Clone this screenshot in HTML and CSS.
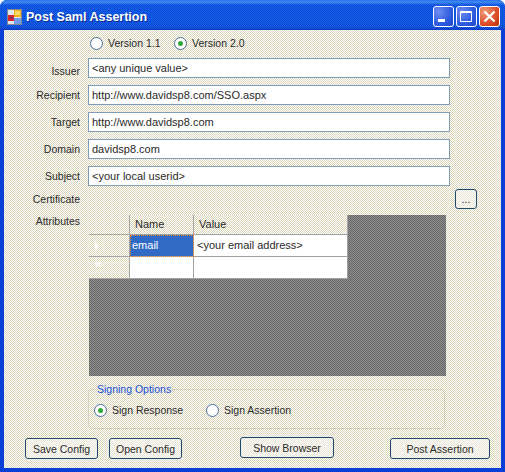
FILE: index.html
```html
<!DOCTYPE html>
<html lang="en">
<head>
<meta charset="utf-8">
<title>Post Saml Assertion</title>
<link rel="stylesheet" href="styles.css">
</head>
<body>
<div class="window">
  <header class="titlebar">
    <svg class="app-icon" width="16" height="16" viewBox="0 0 16 16">
      <rect x="0.500" y="0.500" width="14" height="15" fill="#dfe6ee" stroke="#7f8794"/>
      <rect x="7" y="1" width="7" height="7" fill="#f0b21c"/>
      <rect x="8" y="2" width="5" height="4" fill="#ffdc6a"/>
      <rect x="1" y="6" width="6" height="6" fill="#d8262c"/>
      <rect x="3" y="8" width="3" height="2" fill="#8a2a70"/>
      <rect x="7" y="9" width="7" height="6" fill="#6f9be8"/>
    </svg>
    <span class="title">Post Saml Assertion</span>
    <div class="controls">
      <button class="ctl ctl-blue" aria-label="Minimize"><svg width="21" height="21" viewBox="0 0 21 21"><rect x="5" y="13" width="7" height="3" fill="#fff"/></svg></button>
      <button class="ctl ctl-blue" aria-label="Maximize"><svg width="21" height="21" viewBox="0 0 21 21"><path d="M4.500 5.500h11v10h-11z M4.500 6.500h11" fill="none" stroke="#fff"/></svg></button>
      <button class="ctl ctl-red" aria-label="Close"><svg width="21" height="21" viewBox="0 0 21 21"><path d="M5.500 5.500l10 10M15.500 5.500l-10 10" fill="none" stroke="#fff" stroke-width="2.200"/></svg></button>
    </div>
  </header>
  <main class="client">
    <div class="versions">
      <label class="radio radio-version"><span class="dot"></span>Version 1.1</label>
      <label class="radio"><span class="dot on"></span>Version 2.0</label>
    </div>
    <div class="field"><span class="lbl lbl-low">Issuer</span><div class="input">&lt;any unique value&gt;</div></div>
    <div class="field"><span class="lbl">Recipient</span><div class="input">http://www.davidsp8.com/SSO.aspx</div></div>
    <div class="field"><span class="lbl">Target</span><div class="input">http://www.davidsp8.com</div></div>
    <div class="field"><span class="lbl">Domain</span><div class="input">davidsp8.com</div></div>
    <div class="field"><span class="lbl">Subject</span><div class="input">&lt;your local userid&gt;</div></div>
    <div class="cert"><span class="lbl">Certificate</span><button class="btn btn-dots">...</button></div>
    <div class="attrs">
      <span class="lbl">Attributes</span>
      <div class="grid-view">
        <div class="grid">
          <div class="gh"></div><div class="gh">Name</div><div class="gh">Value</div>
          <div class="rh"><span class="arrow"></span></div><div class="gc sel">email</div><div class="gc">&lt;your email address&gt;</div>
          <div class="rh"><span class="star">*</span></div><div class="gc"></div><div class="gc"></div>
        </div>
      </div>
    </div>
    <fieldset class="signing">
      <legend>Signing Options</legend>
      <label class="radio radio-sign"><span class="dot on"></span>Sign Response</label>
      <label class="radio"><span class="dot"></span>Sign Assertion</label>
    </fieldset>
    <div class="actions">
      <button class="btn btn-save">Save Config</button>
      <button class="btn btn-open">Open Config</button>
      <button class="btn btn-show">Show Browser</button>
      <button class="btn btn-post">Post Assertion</button>
    </div>
  </main>
</div>
</body>
</html>
```
FILE: styles.css
```css
* { box-sizing: border-box; }
html, body { margin: 0; padding: 0; }
body {
  width: 505px;
  height: 472px;
  overflow: hidden;
  font-family: "Liberation Sans", Arial, sans-serif;
  font-size: 11px;
  color: #2a2a2a;
  background: #fff;
}
.window {
  width: 505px;
  height: 472px;
  display: flex;
  flex-direction: column;
  background: #0a3fd8;
  padding: 0 4px 4px;
  border-radius: 7px 7px 0 0;
}
.titlebar {
  height: 30px;
  flex: none;
  display: flex;
  align-items: center;
  margin: 0 -4px;
  padding: 3px 5px 0 7px;
  border-radius: 7px 7px 0 0;
  background:
    repeating-conic-gradient(rgba(255, 255, 255, 0.07) 0 25%, rgba(0, 0, 60, 0.07) 0 50%) 0 0 / 2px 2px,
    linear-gradient(#1f6cf0 0, #3b8cf6 2px, #0a52e6 5px, #0553e4 20px, #0a4fe0 27px, #0436c4 30px);
}
.app-icon { flex: none; margin-right: 3px; }
.title {
  flex: 1;
  color: #fff;
  font-weight: bold;
  font-size: 12.500px;
  text-shadow: 1px 1px #0a2a90;
}
.controls { display: flex; gap: 2px; margin-top: -1px; }
.ctl {
  width: 21px;
  height: 21px;
  padding: 0;
  border: 1px solid #fff;
  border-radius: 3px;
  display: block;
  position: relative;
}
.ctl svg { position: absolute; left: -1px; top: -1px; }
.ctl-blue { background: radial-gradient(circle at 25% 25%, #6f8df0, #2d5ce0 60%, #1c46c8); }
.ctl-red { background: radial-gradient(circle at 25% 25%, #ef9a78, #dc4e28 60%, #b8300e); }
.client {
  flex: 1;
  padding: 3px 0 0;
  background: repeating-conic-gradient(#ffffff 0 25%, #dbd6bb 0 50%) 0 0 / 2px 2px;
}
.versions {
  height: 20px;
  display: flex;
  padding-left: 86px;
  margin-bottom: 5px;
}
.radio { display: flex; align-items: center; gap: 5px; font-size: 10.500px; }
.radio-version { width: 84px; }
.radio-sign { width: 112px; }
.dot {
  flex: none;
  width: 13px;
  height: 13px;
  border: 1px solid #4a6f9c;
  border-radius: 50%;
  background: #fff;
  display: flex;
  align-items: center;
  justify-content: center;
}
.dot.on::after {
  content: "";
  width: 5px;
  height: 5px;
  border-radius: 50%;
  background: #2fa83a;
}
.field {
  display: flex;
  height: 20px;
  margin-bottom: 7px;
  align-items: center;
}
.lbl {
  width: 76px;
  flex: none;
  text-align: right;
  font-size: 10.500px;
}
.lbl-low { margin-top: 6px; }
.input {
  width: 362px;
  height: 20px;
  margin-left: 8px;
  border: 1px solid #7f9db9;
  background: #fff;
  padding: 0 3px;
  line-height: 18px;
  white-space: nowrap;
}
.cert {
  display: flex;
  align-items: center;
  height: 20px;
  margin-top: -4px;
}
.btn {
  font: inherit;
  font-size: 10.500px;
  color: inherit;
  padding: 0;
  border: 1px solid #1f4a6e;
  border-radius: 3px;
  height: 21px;
  background: repeating-conic-gradient(#ffffff 0 25%, #e6e3d2 0 50%) 0 0 / 2px 2px;
}
.btn-dots {
  width: 22px;
  height: 20px;
  margin-left: 375px;
}
.attrs {
  display: flex;
  margin-top: 6px;
  height: 161px;
}
.grid-view {
  width: 357px;
  height: 161px;
  margin-left: 9px;
  background: repeating-conic-gradient(#8c8c8c 0 25%, #6a6a6a 0 50%) 0 0 / 2px 2px;
}
.grid {
  display: grid;
  grid-template-columns: 41px 64px 154px;
  grid-template-rows: 20px 22px 22px;
  width: 259px;
}
.gh, .rh {
  background: repeating-conic-gradient(#ffffff 0 25%, #dbd6bb 0 50%) 0 0 / 2px 2px;
  border-right: 1px solid #a5a5a5;
  border-bottom: 1px solid #a5a5a5;
  padding-left: 5px;
  line-height: 19px;
}
.gc {
  background: #fff;
  border-right: 1px solid #a0a0a0;
  border-bottom: 1px solid #a0a0a0;
  padding-left: 3px;
  line-height: 21px;
}
.sel {
  background: #316ac5;
  color: #fff;
  padding-left: 2px;
  outline: 1px dotted #f08a2c;
  outline-offset: -1px;
}
.rh { display: flex; align-items: center; padding: 0 0 0 6px; }
.arrow {
  width: 0;
  height: 0;
  border-left: 5px solid #fff;
  border-top: 4px solid transparent;
  border-bottom: 4px solid transparent;
}
.star { color: #fff; font-size: 16px; font-weight: bold; line-height: 16px; }
.signing {
  margin: 7px 0 0 84px;
  width: 357px;
  height: 46px;
  padding: 0 0 4px 5px;
  border: 1px solid #d6d3c0;
  border-radius: 4px;
  display: flex;
  align-items: center;
}
.signing legend {
  color: #1a4fd8;
  padding: 0 1px;
  margin-left: 2px;
  line-height: 13px;
  font-size: 10.500px;
}
.signing .radio { height: 20px; }
.actions {
  display: flex;
  align-items: flex-start;
  margin: 9px 0 0 21px;
}
.btn-save { width: 73px; }
.btn-open { width: 73px; margin-left: 11px; }
.btn-show { width: 94px; margin-left: 58px; margin-top: -1px; }
.btn-post { width: 100px; margin-left: 56px; }
```
